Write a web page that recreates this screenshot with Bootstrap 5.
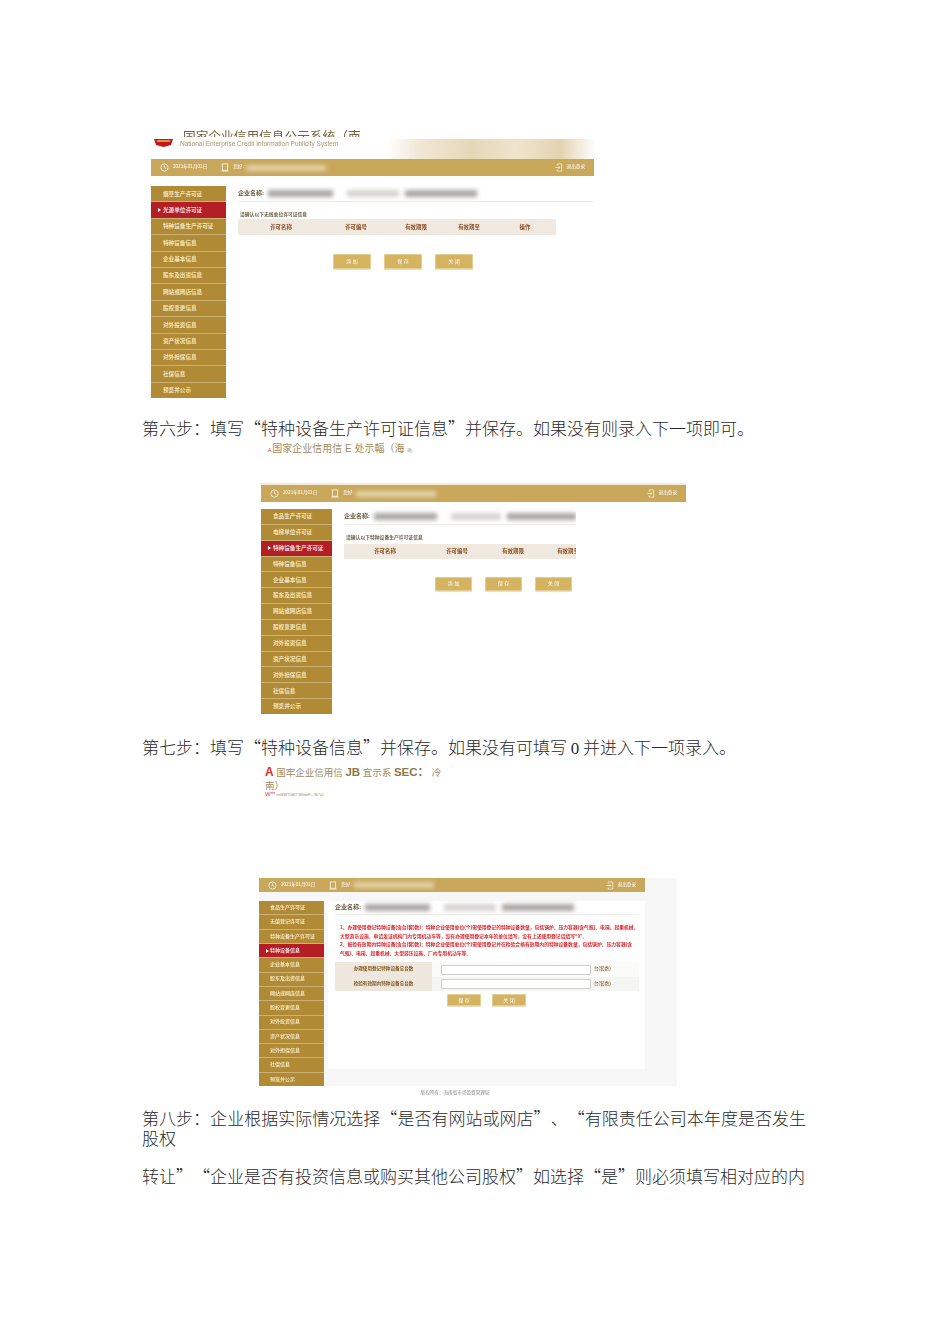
<!DOCTYPE html>
<html lang="zh-CN"><head><meta charset="utf-8"><title>企业年报填写步骤</title>
<link href="https://cdn.jsdelivr.net/npm/bootstrap@5.3.0/dist/css/bootstrap.min.css" rel="stylesheet">
<style>
html,body{background:#fff}
body{font-family:"Liberation Sans","Noto Sans CJK SC",sans-serif;height:1344px;overflow:hidden;margin:0}
.doc-page{padding:130px 0 0 142px;width:950px}
.step-text{font-family:"Noto Sans CJK SC",serif;font-size:17px;line-height:20px;color:#2a2a2a;width:664px;margin:0;text-align:justify;font-weight:300;text-spacing-trim:space-all}
.latin-num{font-family:"Liberation Serif",serif}
.step-1{margin-top:20px}.step-2{margin-top:23px}.step-3{margin-top:10px}.step-4{margin-top:18px;white-space:nowrap}
.shot{filter:blur(.6px);color:#8a5a22}
.shot-a{margin-left:9px;width:445px}
.shot-b{margin-left:119px;width:425px;margin-top:26px}
.shot-c{margin-left:117px;width:418px;margin-top:80px;background:#f7f7f7}
.title-clip{height:7px;overflow:hidden;margin-left:32px;font-size:12.7px;line-height:14px;color:#77603a;white-space:nowrap}
.logo-strip{height:20px;margin-top:2px;background:linear-gradient(90deg,#fff 53%,#f1e8d6 60%,#e6d7b8 72%,#efe4cc 82%,#e3d3b2 92%,#fff 100%)}
.logo-strip svg{margin:0 7px 0 3px}
.en-name{font-size:6.5px;color:#a8956a;line-height:10px}
.top-bar{background:#c9a85c;height:17px;color:#fff;font-size:4.6px;padding:0 9px}
.shot-a .top-bar{width:443px}
.shot-b .top-bar{box-shadow:0 -2px 0 #f3ead8}
.shot-c .top-bar{width:386px;height:14px;margin-top:1px}
.bar-user{margin-left:14px}
.redact-sm{width:80px;height:6px;margin-left:2px;background:#e2d2a8;filter:blur(2px)}
.shot-body-a{margin-top:10px;height:212px}
.shot-body-b{margin-top:7px;height:205px}
.shot-body-c{margin-top:9px;height:185px}
.side-menu{flex:none;display:flex;flex-direction:column}
.shot-a .side-menu{width:75px}.shot-b .side-menu{width:71px}.shot-c .side-menu{width:65px}
.side-item{flex:1;background:#b08a35;border-bottom:1px solid #cdb277;color:#f3e3bd;font-size:5.6px;font-weight:700;display:flex;align-items:center;padding-left:12px;white-space:nowrap;position:relative}
.shot-c .side-item{font-size:5px;padding-left:11px}
.side-item:last-child{border-bottom:0}
.side-active{background:#b31f24;color:#f8dcdc}
.side-active::before{content:"";position:absolute;left:7px;top:50%;margin-top:-2px;border-left:3px solid #fff;border-top:2px solid transparent;border-bottom:2px solid transparent}
.main-a{margin-left:12px;width:356px}
.main-b{margin-left:12px;width:232px;overflow:hidden}
.main-c{margin-left:4px;width:317px;height:168px;background:#fff;padding:0 6px 0 7px}
.co-line{height:16px;border-bottom:1px solid #f0ece4;font-size:6px;color:#6b5a3a;font-weight:700;white-space:nowrap}
.main-c .co-line{height:14px}
.redact{height:7px;background:#a9a6a3;filter:blur(2px);margin-left:4px}
.r1{width:65px}.r2{width:52px;margin-left:14px;background:#d6d4d2}.r3{width:72px;margin-left:6px}
.hint{font-size:4.8px;color:#6f5f46;margin:9px 0 0 2px;line-height:8px;font-weight:700;white-space:nowrap}
.shot-b .hint{margin:9px 0 2px 2px}
.thead-band{background:#f0e9e0;height:16px;font-size:5.4px;color:#8a4a1c;font-weight:700;white-space:nowrap}
.shot-a .thead-band{width:318px}.shot-b .thead-band{width:232px;height:15px}
.thead-band span{flex:none;text-align:center}
.w1{width:86px}.w2{width:64px}.w3{width:56px}.w4{width:50px}.w5{width:62px}
.x1{width:82px}.x2{width:62px}.x3{width:50px}.x4{width:60px}
.act-row{gap:13px}
.shot-a .act-row{margin:19px 0 0 95px}
.shot-b .act-row{margin:18px 0 0 91px}
.shot-c .act-row{margin:3px 0 0 112px;gap:11px}
.gold-btn{background:#d4b361;color:#fff;font-size:5px;width:38px;height:15px;border-radius:1px;border:1px solid #e3cd92;box-shadow:0 1px 1px #e8dcc0;padding:0}
.shot-b .gold-btn{width:37px;height:14px}
.shot-c .gold-btn{width:34px;height:12px}
.rule-text{color:#d8262c;font-size:4.8px;line-height:8.6px;margin:9px 0 0 5px;width:299px;font-weight:700;white-space:nowrap}
.form-row{height:14.5px;background:#fbfbf9;width:304px;font-size:4.6px;color:#8a5a22}
.form-row-alt{background:#f5f5f3}
.form-label-cell{width:97px;height:100%;background:#ede7dd;text-align:center;line-height:14.5px;font-weight:700;margin-right:9px;white-space:nowrap}
.form-box{width:150px;height:10px;background:#fff;border:1px solid #cfcfcf;margin-right:3px}
.form-stack{margin-top:4px}
.foot-line{height:12px;font-size:4.6px;line-height:13px;text-align:center;color:#8d8d8d;background:#fff;padding-right:26px}
.cap-2{margin-left:126px;margin-top:3px;font-size:10px;line-height:16px;color:#a08c5e;white-space:nowrap}
.cap-2 b{color:#d6402f;font-size:5px;font-weight:400;margin-right:1px}
.cap-2 i{font-style:normal;font-size:4px}
.cap-3{margin:7px 0 0 123px;width:180px;font-size:9.5px;line-height:13px;color:#9b8a62}
.cap-3 strong{font-size:11.5px;color:#8d7a45}
.cap-3 b{color:#d8342a;font-size:12px}
.cap-3 small{display:block;font-size:3.6px;line-height:5px;white-space:nowrap}
.cap-3 small b{font-size:6px;line-height:5px;font-weight:400}
</style></head><body>
<div class="doc-page">
  <div class="shot shot-a">
    <div class="title-clip">国家企业信用信息公示系统（南</div>
    <div class="logo-strip d-flex"><svg width="19" height="8" viewBox="0 0 19 8"><path d="M0 0H19L17 6 9.5 8 2 6Z" fill="#c4161c"/><path d="M3 2H16" stroke="#e9c24d" stroke-width="1.5"/></svg><span class="en-name">National Enterprise Credit Information Publicity System</span></div>
    <div class="top-bar d-flex align-items-center">
      <svg width="9" height="9" viewBox="0 0 10 10" class="me-1"><circle cx="5" cy="5" r="4" fill="none" stroke="#fff" stroke-width=".8"/><path d="M5 2.5V5L7 6" fill="none" stroke="#fff" stroke-width=".7"/></svg><span>2021年01月01日</span>
      <svg width="8" height="9" viewBox="0 0 8 10" class="bar-user me-1"><rect x="1" y="1" width="6" height="7" fill="none" stroke="#fff" stroke-width=".8"/><path d="M0 9H8" stroke="#fff" stroke-width=".8"/></svg><span>您好:</span><div class="redact-sm"></div>
      <svg width="8" height="9" viewBox="0 0 8 10" class="ms-auto me-1"><path d="M2 3V1H7V9H2V7M0 5H5M3.5 3.5 5 5 3.5 6.5" fill="none" stroke="#fff" stroke-width=".7"/></svg><span>退出登录</span>
    </div>
    <div class="shot-body-a d-flex">
      <div class="side-menu">
        <div class="side-item">烟草生产许可证</div><div class="side-item side-active">光源单位许可证</div><div class="side-item">特种设备生产许可证</div><div class="side-item">特种设备信息</div><div class="side-item">企业基本信息</div><div class="side-item">股东及出资信息</div><div class="side-item">网站或网店信息</div><div class="side-item">股权变更信息</div><div class="side-item">对外投资信息</div><div class="side-item">资产状况信息</div><div class="side-item">对外担保信息</div><div class="side-item">社保信息</div><div class="side-item">预览并公示</div>
      </div>
      <div class="main-a">
        <div class="co-line d-flex align-items-center"><span>企业名称:</span><div class="redact r1"></div><div class="redact r2"></div><div class="redact r3"></div></div>
        <div class="hint">请确认以下无线单位许可证信息</div>
        <div class="thead-band d-flex align-items-center"><span class="w1">许可名称</span><span class="w2">许可编号</span><span class="w3">有效期限</span><span class="w4">有效期至</span><span class="w5">操作</span></div>
        <div class="act-row d-flex"><button class="gold-btn">添 加</button><button class="gold-btn">保 存</button><button class="gold-btn">关 闭</button></div>
      </div>
    </div>
  </div>
  <p class="step-text step-1">第六步：填写“特种设备生产许可证信息”并保存。如果没有则录入下一项即可。</p>
  <div class="cap-2"><b>A</b>国家企业信用信 E 处示輻（海 <i>南)</i></div>
  <div class="shot shot-b">
    <div class="top-bar d-flex align-items-center">
      <svg width="9" height="9" viewBox="0 0 10 10" class="me-1"><circle cx="5" cy="5" r="4" fill="none" stroke="#fff" stroke-width=".8"/><path d="M5 2.5V5L7 6" fill="none" stroke="#fff" stroke-width=".7"/></svg><span>2021年01月01日</span>
      <svg width="8" height="9" viewBox="0 0 8 10" class="bar-user me-1"><rect x="1" y="1" width="6" height="7" fill="none" stroke="#fff" stroke-width=".8"/><path d="M0 9H8" stroke="#fff" stroke-width=".8"/></svg><span>您好:</span><div class="redact-sm"></div>
      <svg width="8" height="9" viewBox="0 0 8 10" class="ms-auto me-1"><path d="M2 3V1H7V9H2V7M0 5H5M3.5 3.5 5 5 3.5 6.5" fill="none" stroke="#fff" stroke-width=".7"/></svg><span>退出登录</span>
    </div>
    <div class="shot-body-b d-flex">
      <div class="side-menu">
        <div class="side-item">食品生产许可证</div><div class="side-item">电梯单位许可证</div><div class="side-item side-active">特种设备生产许可证</div><div class="side-item">特种设备信息</div><div class="side-item">企业基本信息</div><div class="side-item">股东及出资信息</div><div class="side-item">网站或网店信息</div><div class="side-item">股权变更信息</div><div class="side-item">对外投资信息</div><div class="side-item">资产状况信息</div><div class="side-item">对外担保信息</div><div class="side-item">社保信息</div><div class="side-item">预览并公示</div>
      </div>
      <div class="main-b">
        <div class="co-line d-flex align-items-center"><span>企业名称:</span><div class="redact r1"></div><div class="redact r2"></div><div class="redact r3"></div></div>
        <div class="hint">请确认以下特种设备生产许可证信息</div>
        <div class="thead-band d-flex align-items-center"><span class="x1">许可名称</span><span class="x2">许可编号</span><span class="x3">有效期限</span><span class="x4">有效期至</span></div>
        <div class="act-row d-flex"><button class="gold-btn">添 加</button><button class="gold-btn">保 存</button><button class="gold-btn">关 闭</button></div>
      </div>
    </div>
  </div>
  <p class="step-text step-2">第七步：填写“特种设备信息”并保存。如果没有可填写 <span class="latin-num">0</span> 并进入下一项录入。</p>
  <div class="cap-3"><b>A</b> 国牢企业信用信 <strong>JB</strong> 宜示系 <strong>SEC：</strong> 冷 南）<small><b>W**</b> enfSWT-tMO"Wt/doF/-. Sh*a1</small></div>
  <div class="shot shot-c">
    <div class="top-bar d-flex align-items-center">
      <svg width="9" height="9" viewBox="0 0 10 10" class="me-1"><circle cx="5" cy="5" r="4" fill="none" stroke="#fff" stroke-width=".8"/><path d="M5 2.5V5L7 6" fill="none" stroke="#fff" stroke-width=".7"/></svg><span>2021年01月01日</span>
      <svg width="8" height="9" viewBox="0 0 8 10" class="bar-user me-1"><rect x="1" y="1" width="6" height="7" fill="none" stroke="#fff" stroke-width=".8"/><path d="M0 9H8" stroke="#fff" stroke-width=".8"/></svg><span>您好:</span><div class="redact-sm"></div>
      <svg width="8" height="9" viewBox="0 0 8 10" class="ms-auto me-1"><path d="M2 3V1H7V9H2V7M0 5H5M3.5 3.5 5 5 3.5 6.5" fill="none" stroke="#fff" stroke-width=".7"/></svg><span>退出登录</span>
    </div>
    <div class="shot-body-c d-flex">
      <div class="side-menu">
        <div class="side-item">食品生产许可证</div><div class="side-item">无菌登记许可证</div><div class="side-item">特种设备生产许可证</div><div class="side-item side-active">特种设备信息</div><div class="side-item">企业基本信息</div><div class="side-item">股东及出资信息</div><div class="side-item">网站或网店信息</div><div class="side-item">股权变更信息</div><div class="side-item">对外投资信息</div><div class="side-item">资产状况信息</div><div class="side-item">对外担保信息</div><div class="side-item">社保信息</div><div class="side-item">预览并公示</div>
      </div>
      <div class="main-c">
        <div class="co-line d-flex align-items-center"><span>企业名称:</span><div class="redact r1"></div><div class="redact r2"></div><div class="redact r3"></div></div>
        <div class="rule-text">1、办理使用登记特种设备(含台(套)数)：特种企业使用单位(个)需使用登记的特种设备数量，包括锅炉、压力容器(含气瓶)、电梯、起重机械、<br>大型游乐设施。申请发证机构门内专用机动车等，没有办理使用登记本年的单位填写，没有上述使用登记请填写“0”。<br>2、报检有效期内特种设备(含台(套)数)：特种企业使用单位(个)需使用登记并在检验合格有效期内的特种设备数量，包括锅炉、压力容器(含<br>气瓶)、电梯、起重机械、大型游乐设施、厂内专用机动车等。</div>
        <div class="form-stack">
          <div class="form-row d-flex align-items-center"><div class="form-label-cell">办理使用登记特种设备总台数</div><div class="form-box"></div><span>台(套数)</span></div>
          <div class="form-row form-row-alt d-flex align-items-center"><div class="form-label-cell">检验有效期内特种设备总台数</div><div class="form-box"></div><span>台(套数)</span></div>
        </div>
        <div class="act-row d-flex"><button class="gold-btn">保 存</button><button class="gold-btn">关 闭</button></div>
      </div>
    </div>
    <div class="foot-line">版权所有：海南省市场监督管理局</div>
  </div>
  <p class="step-text step-3">第八步：企业根据实际情况选择“是否有网站或网店”、“有限责任公司本年度是否发生股权</p>
  <p class="step-text step-4">转让”“企业是否有投资信息或购买其他公司股权”如选择“是”则必须填写相对应的内</p>
</div>
<script src="https://cdn.jsdelivr.net/npm/bootstrap@5.3.0/dist/js/bootstrap.bundle.min.js"></script>
</body></html>
